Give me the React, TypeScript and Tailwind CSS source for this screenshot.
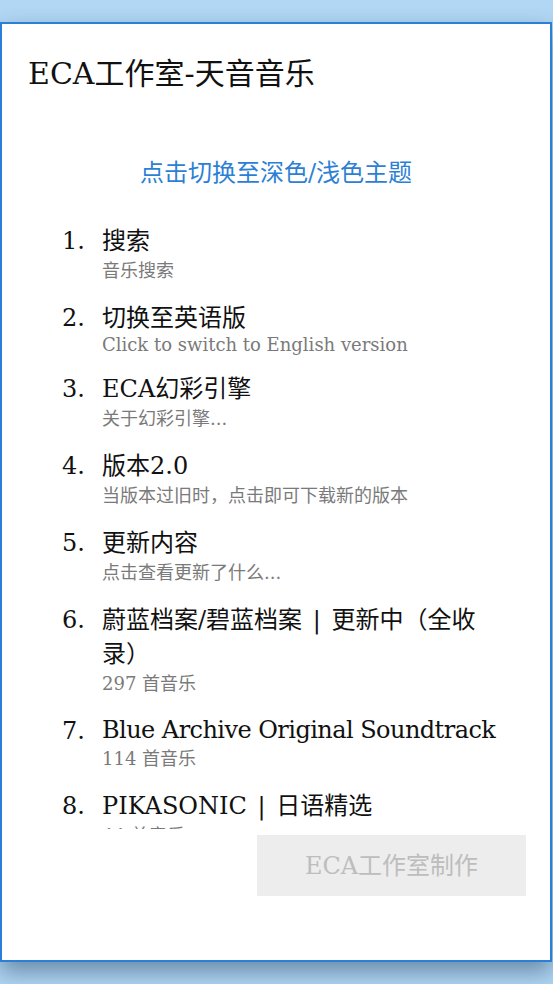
import React from 'react';

type Item = {
  title: string;
  sub: string;
  latinTitle?: boolean;
  latinSub?: boolean;
};

const items: Item[] = [
  { title: '搜索', sub: '音乐搜索' },
  { title: '切换至英语版', sub: 'Click to switch to English version', latinSub: true },
  { title: 'ECA幻彩引擎', sub: '关于幻彩引擎...' },
  { title: '版本2.0', sub: '当版本过旧时，点击即可下载新的版本' },
  { title: '更新内容', sub: '点击查看更新了什么...' },
  { title: '蔚蓝档案/碧蓝档案 | 更新中（全收录）', sub: '297 首音乐' },
  { title: 'Blue Archive Original Soundtrack', sub: '114 首音乐', latinTitle: true },
  { title: 'PIKASONIC | 日语精选', sub: '44 首音乐' },
  { title: '其他音乐', sub: '20 首音乐' },
];

const font = { fontFamily: '"DejaVu Serif", "Noto Sans CJK SC", serif' };

// the separator bar gets a little more air than a plain " | "
const Title = ({ text }: { text: string }) => {
  const parts = text.split(' | ');
  return (
    <>
      {parts.map((p, i) => (
        <React.Fragment key={i}>
          {i > 0 && <span className="px-[3px]"> | </span>}
          {p}
        </React.Fragment>
      ))}
    </>
  );
};

export default function App() {
  return (
    <div className="h-[984px] w-[553px] overflow-hidden bg-[#b2d8f5] pt-[22px]" style={font}>
      <div className="flex h-[940px] w-[552px] flex-col border-2 border-[#2b7fd9] bg-white shadow-[0_10px_22px_rgba(30,60,90,0.5)]">
        {/* Header */}
        <h1 className="pl-[26px] pt-[30px] text-[30px] leading-[40px] text-[#111]">ECA工作室-天音音乐</h1>

        {/* Theme toggle */}
        <button className="mt-[61px] self-center text-[24px] leading-[36px] text-[#2d7fd5]">
          点击切换至深色/浅色主题
        </button>

        {/* Menu list */}
        <div className="mt-[33px] flex-1 overflow-hidden">
          <ol className="flex flex-col gap-[17px] pr-[52px]">
            {items.map((item, i) => (
              <li key={i} className="flex">
                <span className="w-[40px] shrink-0 pl-[60px] box-content text-[24px] leading-[34px] text-[#111]">
                  {i + 1}.
                </span>
                <div className="min-w-0 flex-1">
                  <div
                    className={`text-[24px] text-[#111] ${
                      item.latinTitle ? 'whitespace-nowrap leading-[32px] tracking-[-0.55px]' : 'leading-[34px]'
                    }`}
                  >
                    <Title text={item.title} />
                  </div>
                  <div className={`text-[18px] text-[#7a7a7a] ${item.latinSub ? 'leading-[20px]' : 'leading-[26px]'}`}>
                    {item.sub}
                  </div>
                </div>
              </li>
            ))}
          </ol>
        </div>

        {/* Footer */}
        <div className="flex justify-end pb-[64px] pr-[24px] pt-[6px]">
          <button className="h-[61px] w-[269px] bg-[#ededed] text-[24px] text-[#bdbdbd]">ECA工作室制作</button>
        </div>
      </div>
    </div>
  );
}
